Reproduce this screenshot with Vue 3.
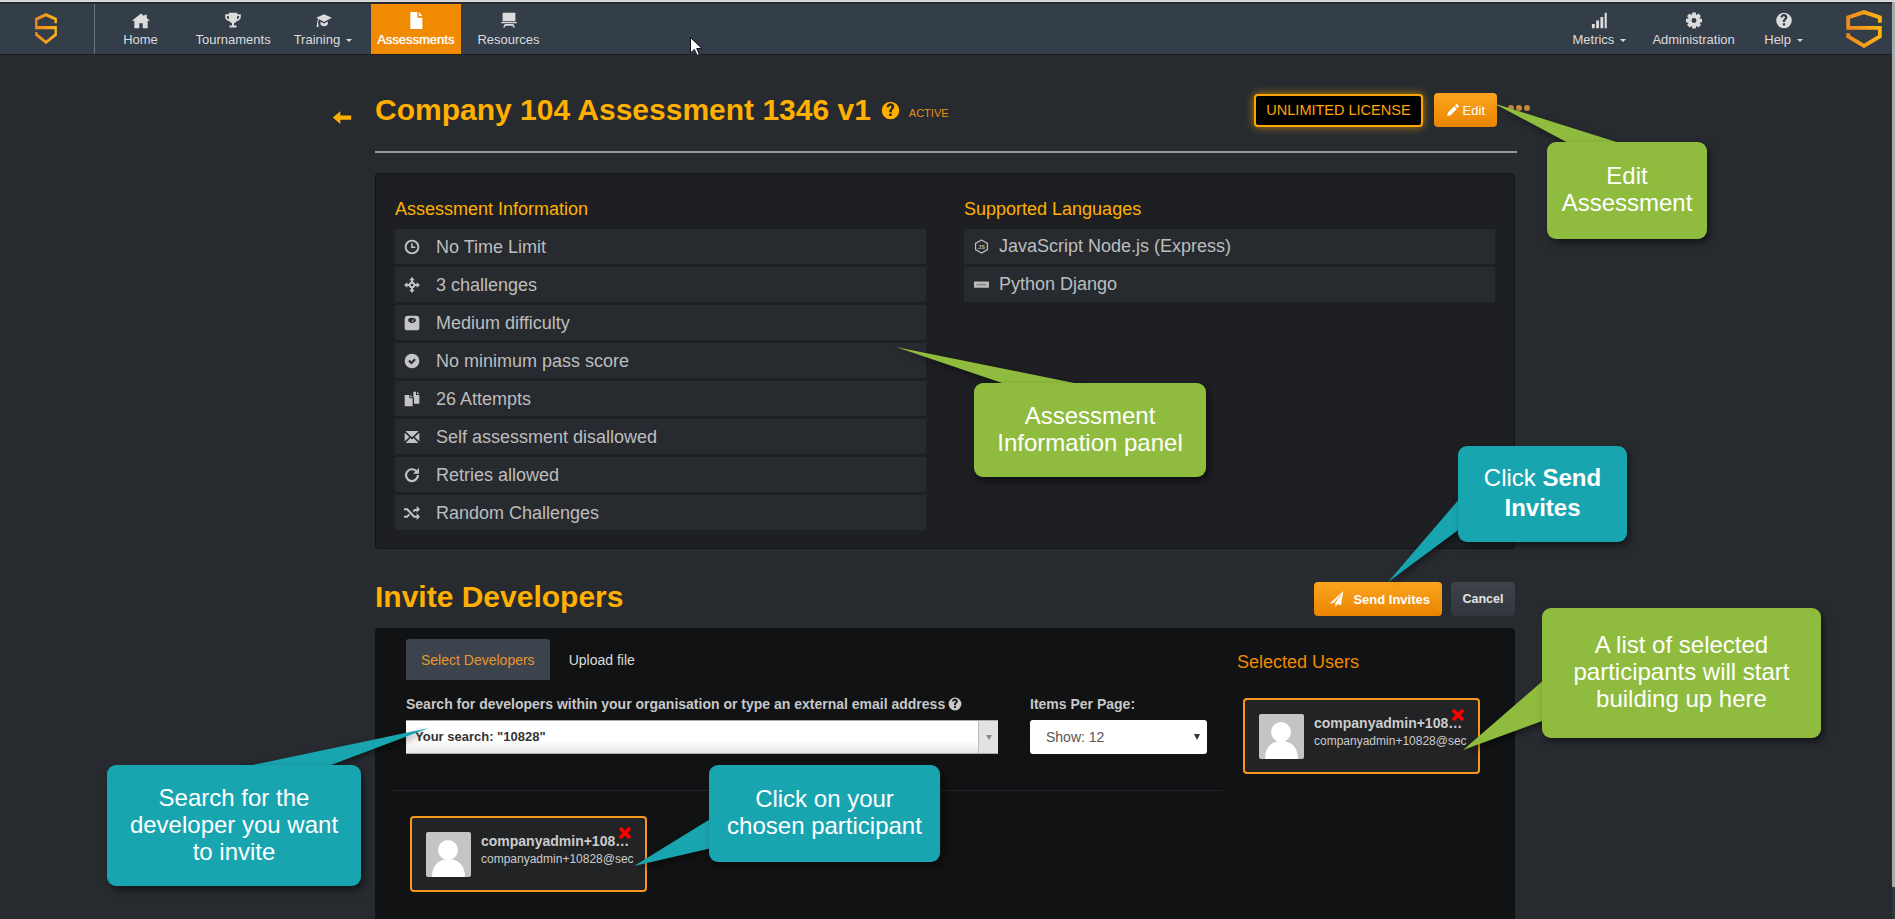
<script setup>
import { ref } from 'vue'

function gear() {
  // eight teeth around the middle, cut out in the centre with evenodd
  let d = ''
  for (let i = 0; i < 8; i++) {
    const a = (i * Math.PI) / 4
    const pts = [[8.6, -0.36], [11.6, -0.22], [11.6, 0.22], [8.6, 0.36]]
    pts.forEach(([r, o], j) => {
      const x = 12 + r * Math.cos(a + o)
      const y = 12 + r * Math.sin(a + o)
      d += (i === 0 && j === 0 ? 'M' : 'L') + x.toFixed(1) + ' ' + y.toFixed(1)
    })
  }
  return d + 'zM12 8.500a3.500 3.500 0 1 0 0 7 3.500 3.500 0 0 0 0-7z'
}

const icons = {
  home: 'M12 2 1 12.500h3V23h6v-7h4v7h6V12.500h3l-4-3.700V4h-3v2z',
  trophy: 'M6 1h12v2h5v4c0 3-2.500 5.500-6 6-.8 1.300-2 2.200-3.500 2.500V19H17v3H7v-3h3.500v-3.500C9 15.200 7.800 14.300 7 13c-3.500-.5-6-3-6-6V3h5zM3.500 5.500V7c0 1.700 1.200 3 3 3.400-.3-1.500-.5-3.200-.5-4.900zm17 0H18c0 1.700-.2 3.400-.5 4.900 1.800-.4 3-1.700 3-3.400z',
  cap: 'M12 3 1 8l3 1.400c-1 1.500-1.500 3.100-1.500 5l-1 6.600h3l-.7-6.500c0-1.500.4-2.900 1.300-4.200L12 14l11-6zM7 13.500V17c0 1.300 2.200 3 5 3s5.500-1.700 5.500-3v-3.500L12 16.300z',
  file: 'M4 0h10v8h7v16H4zM16 0l5 5.500h-5z',
  board: 'M3 1h18v12H3zM1 14h22v2H1zM6 17h12l2.500 5H18l-1-2.500H7L6 22H3.500z',
  signal: 'M2 17h4v6H2zM8 12h4v11H8zM14 7h4v16h-4zM20 1h3v22h-3z',
  gear: gear(),
  help: 'M12 1a11 11 0 1 0 0 22 11 11 0 0 0 0-22zm1.700 18h-3.400v-3.200h3.400zm0-4.800h-3.400v-1.400c0-3 3-3.300 3-5.200 0-.9-.6-1.500-1.500-1.500-1 0-1.600.7-1.600 1.800H7c0-3 2-5.100 5-5.100 2.900 0 4.800 1.800 4.800 4.500 0 3.200-3.100 3.700-3.100 5.300z',
  pencil: 'M2 23l1.500-6.500L15 5l5 5L8.500 21.500zM16.500 3.500l2-2a1.500 1.500 0 0 1 2 0l3 3a1.500 1.500 0 0 1 0 2l-2 2z',
  back: 'M10 3 1 12l9 9v-6h13V9H10z',
  plane: 'M23 0 2 19l7-1.500L23 0 11 18v6l3.500-4.500 5 2z',
  clock: 'M12 1a11 11 0 1 0 0 22 11 11 0 0 0 0-22zm0 2.800a8.200 8.200 0 1 1 0 16.400 8.200 8.200 0 0 1 0-16.400zM10.800 6.500V13.500h6.200v-2.300h-3.900V6.500z',
  target: 'M12 0l4 5h-2.500v2.200a5 5 0 0 1 3.300 3.300H19V8l5 4-5 4v-2.500h-2.200a5 5 0 0 1-3.300 3.300V19H16l-4 5-4-5h2.500v-2.200a5 5 0 0 1-3.300-3.300H5V16l-5-4 5-4v2.500h2.200a5 5 0 0 1 3.300-3.300V5H8zM12 10a2 2 0 1 0 0 4 2 2 0 0 0 0-4z',
  scale: 'M6 1h12a5 5 0 0 1 5 5v13a4 4 0 0 1-4 4H5a4 4 0 0 1-4-4V6a5 5 0 0 1 5-5zM12 4c-3.500 0-6 1.500-6 3.500S8.500 12 12 12s6-2.500 6-4.500S15.500 4 12 4zM11 9.500l4.500-4-2.500 4.500z',
  check: 'M12 1a11 11 0 1 0 0 22 11 11 0 0 0 0-22zM6.300 12.300l2.200-2.200 2.600 2.600 4.400-4.500 2.200 2.200-6.600 6.700z',
  copy: 'M1 6h7v5h5v12H1zM9.500 6l3.500 3.500H9.500zM14 1h4v5h5v13h-8V10l-1-1zM19.500 1 23 4.500h-3.500z',
  mail: 'M1 5.500 8 12l-7 6.500zM23 5.500 16 12l7 6.500zM2 3h20L12 12.500zM2.500 21l7-7.500 2.500 2.300 2.500-2.300 7 7.500z',
  retry: 'M19.300 4.700A10.500 10.500 0 1 0 22.500 12h-3.200a7.300 7.300 0 1 1-2.300-5.300L13.500 10H22.500V1z',
  shuffle: 'M0 5h5.500L16 16h3v-3.500l5 5-5 5V19h-4.500L4 8H0zM0 16h4l3-3 2 2-3.800 4H0zM13 9l2.500-3H19V1.500l5 5-5 5V9h-2.500l-1.500 2z',
}

const nav = [
  { label: 'Home', icon: 'home', cls: 'wide' },
  { label: 'Tournaments', icon: 'trophy' },
  { label: 'Training', icon: 'cap', caret: true },
  { label: 'Assessments', icon: 'file', active: true },
  { label: 'Resources', icon: 'board' },
]
const navRight = [
  { label: 'Metrics', icon: 'signal', caret: true },
  { label: 'Administration', icon: 'gear' },
  { label: 'Help', icon: 'help', caret: true },
]
const info = [
  { icon: 'clock', text: 'No Time Limit' },
  { icon: 'target', text: '3 challenges' },
  { icon: 'scale', text: 'Medium difficulty' },
  { icon: 'check', text: 'No minimum pass score' },
  { icon: 'copy', text: '26 Attempts' },
  { icon: 'mail', text: 'Self assessment disallowed' },
  { icon: 'retry', text: 'Retries allowed' },
  { icon: 'shuffle', text: 'Random Challenges' },
]
const tab = ref('select')
const pointers = [
  { pts: '1493,103 1572,145 1626,145', fill: '#8fbc3e' },
  { pts: '896,347 1011,386 1089,386', fill: '#8fbc3e' },
  { pts: '1463,750 1545,679 1545,720', fill: '#8fbc3e' },
  { pts: '1388,582 1461,497 1461,528', fill: '#19a5b0' },
  { pts: '429,728 238,768 323,768', fill: '#19a5b0' },
  { pts: '634,866 712,818 712,848', fill: '#19a5b0' },
]
const person = { name: 'companyadmin+108…', email: 'companyadmin+10828@sec' }
</script>

<template>
  <div class="app">
    <div class="page">
      <header class="topbar">
        <div class="brand">
          <svg class="logo-sm" viewBox="0 0 34 36" preserveAspectRatio="none"><defs><linearGradient id="lg1" x1="0" x2="1" y1="0" y2="0"><stop offset="0" stop-color="#ef8a1e"/><stop offset="1" stop-color="#fdb515"/></linearGradient></defs><path d="M32 12V7L17 2 2 7v10h30v8L17 34 2 25v-3" fill="none" stroke="url(#lg1)" stroke-width="3.600"/></svg>
        </div>
        <nav class="menu">
          <a v-for="n in nav" :key="n.label" class="menu-item" :class="[n.cls, { active: n.active }]">
            <svg class="menu-icon" viewBox="0 0 24 24" :preserveAspectRatio="n.cls ? 'none' : undefined"><path :d="icons[n.icon]" fill-rule="evenodd"/></svg>
            <span class="menu-label">{{ n.label }}<i v-if="n.caret" class="caret"></i></span>
          </a>
        </nav>
        <nav class="menu menu-right">
          <a v-for="n in navRight" :key="n.label" class="menu-item plain">
            <svg class="menu-icon" viewBox="0 0 24 24"><path :d="icons[n.icon]" fill-rule="evenodd"/></svg>
            <span class="menu-label">{{ n.label }}<i v-if="n.caret" class="caret"></i></span>
          </a>
        </nav>
        <svg class="logo-lg" viewBox="0 0 34 36"><path d="M32 12V7L17 2 2 7v10h30v8L17 34 2 25v-3" fill="none" stroke="url(#lg1)" stroke-width="3.600"/></svg>
      </header>

      <main class="content">
        <div class="title-row">
          <svg class="back" viewBox="0 0 24 24" preserveAspectRatio="none"><path :d="icons.back"/></svg>
          <h1>Company 104 Assessment 1346 v1</h1>
          <svg class="title-help" viewBox="0 0 24 24"><path :d="icons.help" fill-rule="evenodd"/></svg>
          <span class="state">ACTIVE</span>
          <span class="spacer"></span>
          <span class="license">UNLIMITED LICENSE</span>
          <button class="btn btn-edit"><svg viewBox="0 0 24 24"><path :d="icons.pencil"/></svg>Edit</button>
          <span class="dots"><i></i><i></i><i></i></span>
        </div>
        <hr class="rule" />

        <section class="info-panel">
          <div class="info-col">
            <h3>Assessment Information</h3>
            <ul>
              <li v-for="row in info" :key="row.text">
                <svg viewBox="0 0 24 24"><path :d="icons[row.icon]" fill-rule="evenodd"/></svg>
                <span>{{ row.text }}</span>
              </li>
            </ul>
          </div>
          <div class="info-col lang">
            <h3>Supported Languages</h3>
            <ul>
              <li>
                <svg viewBox="0 0 24 24"><path d="M12 1.500 21.500 7v10L12 22.500 2.500 17V7z" fill="none" stroke="#bbb" stroke-width="2"/><text x="12" y="15.500" text-anchor="middle" class="js">JS</text></svg>
                <span>JavaScript Node.js (Express)</span>
              </li>
              <li>
                <svg viewBox="0 0 24 24"><rect x="0" y="7" width="24" height="10" rx="1" fill="#bbb"/><rect x="4" y="11" width="16" height="2.500" fill="#888"/></svg>
                <span>Python Django</span>
              </li>
            </ul>
          </div>
        </section>

        <div class="invite-head">
          <h2>Invite Developers</h2>
          <div class="invite-actions">
            <button class="btn btn-send"><svg viewBox="0 0 24 24"><path :d="icons.plane"/></svg>Send Invites</button>
            <button class="btn btn-cancel">Cancel</button>
          </div>
        </div>

        <section class="invite-panel">
          <div class="invite-main">
            <div class="tabs">
              <a class="tab" :class="{ on: tab === 'select' }" @click="tab = 'select'">Select Developers</a>
              <a class="tab" :class="{ on: tab === 'upload' }" @click="tab = 'upload'">Upload file</a>
            </div>
            <div class="filters">
              <div class="filter-search">
                <label>Search for developers within your organisation or type an external email address<svg viewBox="0 0 24 24"><path :d="icons.help" fill-rule="evenodd"/></svg></label>
                <div class="combo"><span>Your search: "10828"</span><b><i></i></b></div>
              </div>
              <div class="filter-size">
                <label>Items Per Page:</label>
                <div class="size-select"><span>Show: 12</span><i></i></div>
              </div>
            </div>
            <div class="results">
              <div class="user-card">
                <svg class="avatar" viewBox="0 0 45 45"><rect width="45" height="45" rx="2" fill="#c4c4c4"/><circle cx="22" cy="18" r="10" fill="#fff"/><path d="M6 45c0-12 7-18 16.500-18S39 33 39 45z" fill="#fff"/></svg>
                <div class="user-text"><strong>{{ person.name }}</strong><small>{{ person.email }}</small></div>
                <svg class="remove" viewBox="0 0 14 14"><path d="M2 2l10 10M12 2 2 12" stroke="#f00" stroke-width="3.600"/></svg>
              </div>
            </div>
          </div>
          <aside class="invite-side">
            <h4>Selected Users</h4>
            <div class="user-card">
              <svg class="avatar" viewBox="0 0 45 45"><rect width="45" height="45" rx="2" fill="#c4c4c4"/><circle cx="22" cy="18" r="10" fill="#fff"/><path d="M6 45c0-12 7-18 16.500-18S39 33 39 45z" fill="#fff"/></svg>
              <div class="user-text"><strong>{{ person.name }}</strong><small>{{ person.email }}</small></div>
              <svg class="remove" viewBox="0 0 14 14"><path d="M2 2l10 10M12 2 2 12" stroke="#f00" stroke-width="3.600"/></svg>
            </div>
          </aside>
        </section>
      </main>
    </div>
    <div class="edge"><i></i></div>

    <!-- tutorial notes drawn on top of the page -->
    <svg class="pointers" viewBox="0 0 1895 919">
      <polygon v-for="p in pointers" :key="p.pts" :points="p.pts" :fill="p.fill" />
    </svg>
    <div class="note green n-edit"><span>Edit<br />Assessment</span></div>
    <div class="note green n-info"><span>Assessment<br />Information panel</span></div>
    <div class="note green n-list"><span>A list of selected<br />participants will start<br />building up here</span></div>
    <div class="note teal n-send"><span>Click <b>Send</b><br /><b>Invites</b></span></div>
    <div class="note teal n-search"><span>Search for the<br />developer you want<br />to invite</span></div>
    <div class="note teal n-click"><span>Click on your<br />chosen participant</span></div>
    <svg class="cursor" viewBox="0 0 12 19"><path d="M.5.5v15.500l3.800-3.600 2.800 6 2.300-1-2.700-5.900h5.200z" fill="#fff" stroke="#111" stroke-width="1"/></svg>
  </div>
</template>

<style scoped>
.app { position: relative; display: flex; width: 1895px; height: 919px; overflow: hidden; background: #272b30; color: #c8c8c8; font-family: "Liberation Sans", Arial, sans-serif; border-top: 2px solid #d8d8d8; box-sizing: border-box; }
.page { flex: 1; min-width: 0; display: flex; flex-direction: column; }
.edge { width: 3px; background: #31363c; }
.edge i { display: block; height: 885px; background: #a9a9a9; }

.topbar { display: flex; align-items: stretch; height: 50px; margin-top: 2px; background: #343e49; border-bottom: 1px solid #1b1e22; }
.brand { width: 94px; border-right: 1px solid #6b737c; display: flex; justify-content: center; }
.logo-sm { width: 22px; height: 31px; margin: 9px 0 0 -2px; }
.logo-lg { width: 36px; height: 38px; margin: 6px 10px 0 43px; }
.menu { display: flex; gap: 10px; padding-left: 7px; }
.menu-right { margin-left: auto; gap: 26px; padding: 0; }
.menu-right .menu-item:last-child { margin-left: 3.500px; }
.menu-item { display: flex; flex-direction: column; align-items: center; padding: 8px 6.500px 0; color: #dcdcdc; font-size: 13px; cursor: pointer; }
.menu-item.wide { min-width: 64px; }
.menu-item.wide .menu-icon { width: 20px; }
.menu-item.plain { padding: 8px 0 0; }
.menu-item.active { background: #f08a00; color: #fff; text-shadow: 0 0 1px #fff; }
.menu-icon { width: 18px; height: 17px; fill: #dcdcdc; margin-bottom: 3px; }
.menu-item.active .menu-icon { fill: #fff; }
.menu-label { line-height: 16px; white-space: nowrap; }
.caret { display: inline-block; margin: 0 2px 0 6px; vertical-align: middle; border-left: 3px solid transparent; border-right: 3px solid transparent; border-top: 3px solid #dcdcdc; }
.plain .caret { margin-right: 0; }

.content { width: 1140px; margin-left: 375px; }
.title-row { display: flex; align-items: center; height: 38px; margin: 36px -15px 0 0; }
.back { width: 20px; height: 17px; margin: 14px 23px 0 -43px; fill: #ffb000; }
h1 { margin: 0; font-size: 30px; font-weight: 700; color: #ffb000; white-space: nowrap; }
.title-help { width: 19px; height: 19px; margin-left: 10px; fill: #ffb000; }
.state { margin-left: 9px; font-size: 11px; color: #e98f12; padding-top: 6px; }
.spacer { flex: 1; }
.license { height: 29px; line-height: 29px; padding: 0 10px; border: 2px solid #ffa500; border-radius: 4px; background: #000; color: #ffa500; font-size: 14.500px; box-shadow: 0 0 8px rgba(255, 165, 0, .7); white-space: nowrap; }
.btn { display: inline-flex; align-items: center; height: 34px; border: 0; border-radius: 4px; font-family: inherit; font-size: 13px; color: #fff; cursor: pointer; }
.btn svg { fill: #fff; }
.btn-edit { margin-left: 11px; padding: 0 12px; background: linear-gradient(#fda51e, #e98400); }
.btn-edit svg { width: 13px; height: 14px; margin-right: 4px; }
.dots { display: flex; gap: 2px; margin-left: 11px; margin-top: -4px; }
.dots i { width: 6px; height: 6px; border-radius: 50%; background: #c98a3d; }
.rule { height: 2px; margin: 22px -2px 0 0; border: 0; background: #979797; }

.info-panel { display: grid; grid-template-columns: 531px 531px; gap: 38px; height: 376px; margin-top: 20px; padding: 25px 19px 0; box-sizing: border-box; background: #1d1f23; border: 1px solid #131417; border-radius: 3px; }
h3 { margin: 0 0 10px; font-size: 18px; line-height: 20px; font-weight: 400; color: #ffb000; }
ul { margin: 0; padding: 0; list-style: none; display: flex; flex-direction: column; gap: 3px; }
li { display: flex; align-items: center; gap: 16px; height: 35px; box-sizing: border-box; padding: 1px 0 0 9px; background: #272a2f; font-size: 18px; color: #bdbdbd; }
li svg { width: 16px; height: 16px; fill: #c4c4c4; flex: none; }
.lang li { gap: 10px; padding: 0 0 0 10px; }
.lang li svg { width: 15px; height: 15px; }
.js { font-size: 9px; font-weight: 700; fill: #bbb; font-family: "Liberation Sans", Arial, sans-serif; }

.invite-head { display: flex; align-items: center; justify-content: space-between; height: 34px; margin-top: 33px; }
h2 { margin: 0 0 5px; font-size: 30px; font-weight: 700; color: #ffb000; }
.invite-actions { display: flex; gap: 9px; }
.btn-send { padding: 0 12px 0 14px; font-weight: 700; background: linear-gradient(#fda51e, #e98400); }
.btn-send svg { width: 16px; height: 16px; margin-right: 9px; }
.btn-cancel { justify-content: center; width: 64px; padding: 0; font-size: 12.500px; font-weight: 700; background: linear-gradient(#3f444b, #32363c); color: #e4e4e4; }

.invite-panel { display: grid; grid-template-columns: 848px 1fr; height: 291px; margin-top: 12px; background: #111213; border-radius: 4px 4px 0 0; }
.invite-main { padding: 11px 0 0 15px; }
.tabs { display: flex; margin-left: 16px; }
.tab { display: flex; align-items: center; height: 41px; padding: 0 15px; font-size: 14px; color: #dcdcdc; cursor: pointer; border-radius: 3px 3px 0 0; margin-right: 4px; }
.tab.on { background: #3c434d; color: #e8962d; }
.filters { display: flex; gap: 32px; margin: 16px 0 0 16px; height: 94px; }
label { display: flex; align-items: center; height: 16px; margin-bottom: 8px; font-size: 14px; font-weight: 700; color: #c8c8c8; white-space: nowrap; }
label svg { width: 14px; height: 14px; margin-left: 3px; fill: #c8c8c8; }
.filter-search { width: 592px; }
.filter-size { width: 177px; }
.combo { display: flex; height: 34px; box-sizing: border-box; background: linear-gradient(#fff 60%, #e8e8e8); border: 1px solid #aaa; border-width: 1px 0; color: #333; font-size: 13px; font-weight: 700; }
.combo span { flex: 1; line-height: 32px; padding-left: 9px; }
.combo b { display: flex; align-items: center; justify-content: center; width: 19px; background: #e2e2e2; border-left: 1px solid #bbb; }
.combo i { border-left: 3px solid transparent; border-right: 3px solid transparent; border-top: 5px solid #888; }
.size-select { display: flex; align-items: center; justify-content: space-between; height: 34px; padding: 0 7px 0 16px; background: #fff; border-radius: 3px; color: #555; font-size: 14px; }
.size-select i { border-left: 3px solid transparent; border-right: 3px solid transparent; border-top: 6px solid #333; }
.results { border-top: 1px solid #222327; padding: 25px 0 0 20px; }

.user-card { position: relative; display: flex; gap: 10px; width: 237px; height: 76px; box-sizing: border-box; padding: 14px; background: #222324; border: 2px solid #f7981c; border-radius: 4px; color: #ccc; }
.avatar { width: 45px; height: 45px; flex: none; }
.user-text { width: 151px; white-space: nowrap; }
.user-text strong { display: block; font-size: 14px; line-height: 18px; }
.user-text small { display: block; font-size: 12px; line-height: 18px; }
.remove { position: absolute; left: 206px; top: 8px; width: 14px; height: 14px; }

.invite-side { padding: 23px 0 0 14px; }
h4 { margin: 0; font-size: 18px; line-height: 22px; font-weight: 400; color: #f08a00; }
.invite-side .user-card { margin: 25px 0 0 6px; }

.pointers { position: absolute; left: 0; top: -2px; width: 1895px; height: 919px; pointer-events: none; filter: drop-shadow(2px 3px 3px rgba(0, 0, 0, .45)); }
.note { position: absolute; display: flex; align-items: center; justify-content: center; text-align: center; box-sizing: border-box; padding-bottom: 3px; border-radius: 9px; color: #fff; font-size: 24px; line-height: 27px; box-shadow: 3px 4px 7px rgba(0, 0, 0, .5); }
.note.green { background: #8fbc3e; }
.note.teal { background: #19a5b0; }
.note b { font-weight: 700; }
.n-edit { left: 1547px; top: 140px; width: 160px; height: 97px; }
.n-info { left: 974px; top: 381px; width: 232px; height: 94px; }
.n-list { left: 1542px; top: 606px; width: 279px; height: 130px; }
.n-send { left: 1458px; top: 444px; width: 169px; height: 96px; line-height: 30px; }
.n-search { left: 107px; top: 763px; width: 254px; height: 121px; }
.n-click { left: 709px; top: 763px; width: 231px; height: 97px; }
.cursor { position: absolute; left: 690px; top: 35px; width: 12px; height: 19px; }
</style>

<style>
html, body { margin: 0; background: #272b30; overflow: hidden; }
</style>
